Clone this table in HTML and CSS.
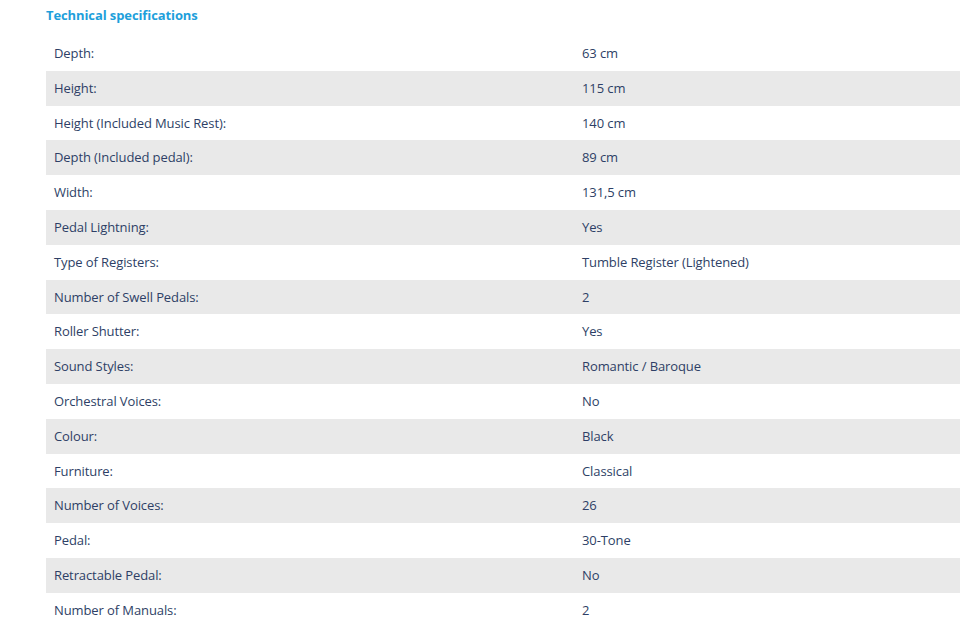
FILE: index.html
```html
<!DOCTYPE html>
<html lang="en">
<head>
<meta charset="utf-8">
<link rel="stylesheet" href="styles.css">
</head>
<body>
<div class="wrap">
  <h2 class="title">Technical specifications</h2>
  <div class="specs">
    <div class="row"><div class="cell">Depth:</div><div class="cell">63 cm</div></div>
    <div class="row"><div class="cell">Height:</div><div class="cell">115 cm</div></div>
    <div class="row"><div class="cell">Height (Included Music Rest):</div><div class="cell">140 cm</div></div>
    <div class="row"><div class="cell">Depth (Included pedal):</div><div class="cell">89 cm</div></div>
    <div class="row"><div class="cell">Width:</div><div class="cell">131,5 cm</div></div>
    <div class="row"><div class="cell">Pedal Lightning:</div><div class="cell">Yes</div></div>
    <div class="row"><div class="cell">Type of Registers:</div><div class="cell">Tumble Register (Lightened)</div></div>
    <div class="row"><div class="cell">Number of Swell Pedals:</div><div class="cell">2</div></div>
    <div class="row"><div class="cell">Roller Shutter:</div><div class="cell">Yes</div></div>
    <div class="row"><div class="cell">Sound Styles:</div><div class="cell">Romantic / Baroque</div></div>
    <div class="row"><div class="cell">Orchestral Voices:</div><div class="cell">No</div></div>
    <div class="row"><div class="cell">Colour:</div><div class="cell">Black</div></div>
    <div class="row"><div class="cell">Furniture:</div><div class="cell">Classical</div></div>
    <div class="row"><div class="cell">Number of Voices:</div><div class="cell">26</div></div>
    <div class="row"><div class="cell">Pedal:</div><div class="cell">30-Tone</div></div>
    <div class="row"><div class="cell">Retractable Pedal:</div><div class="cell">No</div></div>
    <div class="row"><div class="cell">Number of Manuals:</div><div class="cell">2</div></div>
  </div>
</div>
</body>
</html>
```
FILE: styles.css
```css
html, body {
  margin: 0;
  padding: 0;
  background: #fff;
}
body {
  font-family: "Open Sans", "Liberation Sans", sans-serif;
  color: #2e3f66;
  font-size: 13px;
  letter-spacing: -0.1px;
}
.wrap {
  padding: 6px 0 0 46px;
}
.title {
  margin: 0 0 12px 0;
  font-size: 13px;
  font-weight: 700;
  line-height: 18px;
  color: #1e9fdb;
}
.specs {
  display: flex;
  flex-direction: column;
}
.row {
  display: grid;
  grid-template-columns: 528px 1fr;
}
.row:nth-child(even) {
  background: #e9e9e9;
}
.cell {
  padding: 8px;
  line-height: 18.8px;
}
```
